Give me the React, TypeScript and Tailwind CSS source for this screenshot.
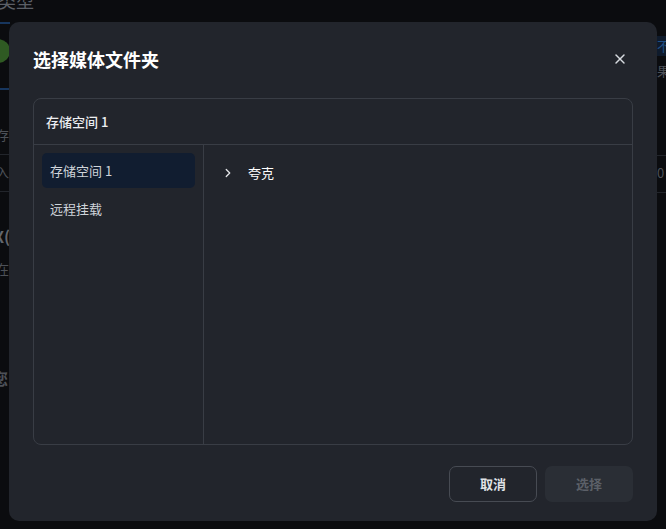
import { X, ChevronRight } from 'lucide-react';

const font = { fontFamily: '"Noto Sans CJK SC", "Noto Sans", sans-serif' };

export default function App() {
  return (
    <div className="relative w-[666px] h-[529px] overflow-hidden bg-[#0b0c0f]" style={font}>
      {/* page behind the overlay, dimmed */}
      <div className="absolute inset-0 flex justify-between text-[13px] text-[#4d5158] whitespace-nowrap">
        <div className="w-[10px] flex flex-col">
          <div className="text-[18px] leading-[20px] mt-[-10px] ml-[-2px] text-[#5b5f66]">类型</div>
          <div className="mt-[12px] h-[2px] bg-[#17365e]" />
          <div className="mt-[15px] ml-[-14px] w-[24px] h-[24px] rounded-full bg-[#2f5a23]" />
          <div className="mt-[25px] h-[2px] bg-[#17365e]" />
          <div className="mt-[36px] ml-[-4px] leading-[18px]">存名</div>
          <div className="mt-[10px] h-px bg-[#22252b]" />
          <div className="mt-[8px] ml-[-4px] leading-[18px]">入</div>
          <div className="mt-[10px] h-px bg-[#22252b]" />
          <div className="mt-[34px] ml-[-6px] text-[16px] font-bold leading-[20px] text-[#62666d]">X(</div>
          <div className="mt-[14px] ml-[-4px] leading-[18px]">在</div>
          <div className="mt-[90px] ml-[-8px] text-[16px] font-bold leading-[20px]">您</div>
        </div>
        <div className="w-[9px] flex flex-col">
          <div className="mt-[36px] h-[20px] bg-[#0f1b2c] text-[#1f4f86] leading-[20px]">不</div>
          <div className="mt-[6px] leading-[18px]">果程</div>
          <div className="mt-[75px] h-px bg-[#22252b]" />
          <div className="mt-[8px] leading-[18px]">0</div>
          <div className="mt-[10px] h-px bg-[#22252b]" />
        </div>
      </div>

      {/* dialog */}
      <div className="absolute left-[9px] top-[22px] w-[648px] h-[499px] rounded-[10px] bg-[#22252c] flex flex-col px-6 pt-6 pb-[19px]">
        <div className="flex items-center justify-between h-[26px]">
          <h2 className="text-[18px] font-bold text-white">选择媒体文件夹</h2>
          <button className="text-[#d7dbe0] mr-[5px]">
            <X size={16} strokeWidth={2.2} />
          </button>
        </div>

        <div className="mt-[26px] h-[347px] rounded-[8px] border border-[#393d45] flex flex-col">
          <div className="h-[46px] flex items-center px-3 border-b border-[#393d45] text-[13px] font-medium text-[#eceef1]">
            存储空间 1
          </div>
          <div className="flex flex-1">
            <div className="w-[170px] border-r border-[#393d45] p-2 flex flex-col gap-[3px]">
              <div className="h-[35px] rounded-[5px] bg-[#111d30] flex items-center px-2 text-[13px] text-[#cfd4da]">
                存储空间 1
              </div>
              <div className="h-[35px] flex items-center px-2 text-[13px] text-[#cfd4da]">远程挂载</div>
            </div>
            <div className="flex-1 pt-[18px] pl-[17px]">
              <div className="flex items-center h-[20px] text-[13px] text-white">
                <ChevronRight size={14} strokeWidth={2.2} className="text-[#e5e7ea]" />
                <span className="ml-[13px]">夸克</span>
              </div>
            </div>
          </div>
        </div>

        <div className="mt-auto flex justify-end gap-2">
          <button className="w-[88px] h-[36px] rounded-[7px] border border-[#474b53] text-[13px] font-bold text-[#dfe2e6]">
            取消
          </button>
          <button className="w-[88px] h-[36px] rounded-[7px] bg-[#2a2e35] text-[13px] font-bold text-[#5c6068]">
            选择
          </button>
        </div>
      </div>
    </div>
  );
}
